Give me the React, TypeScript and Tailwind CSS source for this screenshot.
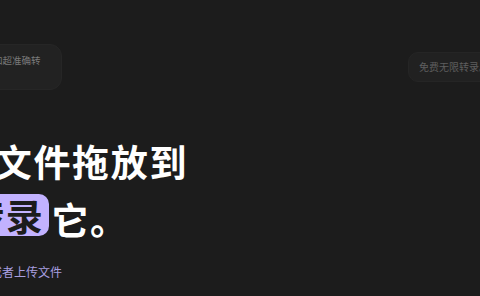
export default function App() {
  return (
    <div
      className="relative h-[296px] w-[480px] overflow-hidden bg-[#1c1c1c]"
      style={{ fontFamily: '"Noto Sans CJK SC", "Noto Sans", sans-serif' }}
    >
      {/* floating cards row */}
      <div className="flex items-start justify-between pt-[44px]">
        <div className="ml-[-58px] h-[46px] rounded-[12px] border border-[#262626] bg-[#222222] pl-[12px] pr-[20px] pt-[8px]">
          <p className="whitespace-nowrap text-[9.5px] leading-[14px] text-[#7a7a7a]">为应用添加超准确转</p>
        </div>
        <div className="mr-[-24px] mt-[8px] h-[30px] rounded-[10px] border border-[#252525] bg-[#212121] pl-[10px] pr-[14px] pt-[7px]">
          <p className="whitespace-nowrap text-[10px] leading-[14px] text-[#5e5e5e]">免费无限转录。</p>
        </div>
      </div>

      {/* headline */}
      <div className="ml-[-40px] mt-[42px]">
        <h1 className="ml-[-4px] whitespace-nowrap text-[37px] font-bold leading-[58px] tracking-[1.7px] text-white">把文件拖放到</h1>
        <div className="flex items-center whitespace-nowrap text-[37px] font-bold leading-[58px] tracking-[1.7px] text-white">
          <span className="mb-[8px] rounded-[10px] bg-[#c2b2ff] pl-[7px] pr-[5px] leading-[42px] text-[#1c1c1c]">转录</span>
          <span className="ml-[2px]">它。</span>
        </div>
        <p className="ml-[6px] mt-[16px] whitespace-nowrap text-[12px] leading-[16px] text-[#a99fe0]">点击或者上传文件</p>
      </div>
    </div>
  );
}
